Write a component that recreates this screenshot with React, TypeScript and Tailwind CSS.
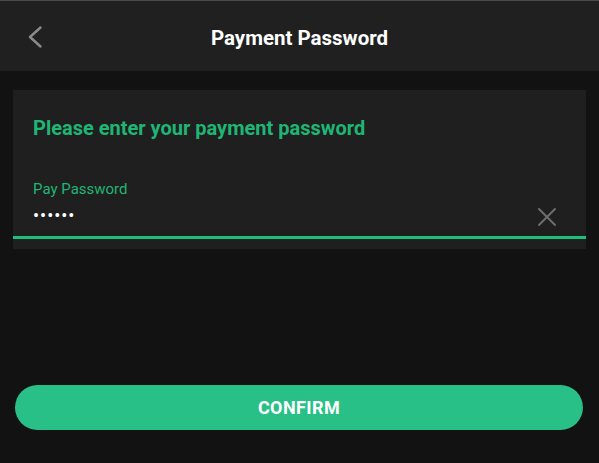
import { X } from 'lucide-react';

export default function App() {
  return (
    <div className="min-h-screen bg-[#121212] font-['Roboto',sans-serif]">
      {/* Header */}
      <header className="relative h-[71px] bg-[#202020] border-t border-[#4a4a4a] flex items-center justify-center">
        <button className="absolute left-[28px] top-[25px] text-[#8a8a8a]">
          <svg width="14" height="22" viewBox="0 0 14 22" fill="none" stroke="currentColor" strokeWidth="2.4" strokeLinecap="round" strokeLinejoin="round">
            <path d="M12.5 1.5 L2 11 L12.5 20.5" />
          </svg>
        </button>
        <h1 className="text-white text-[20.5px] font-bold leading-6 mt-[4px]">Payment Password</h1>
      </header>

      {/* Card */}
      <div className="mx-[13px] mt-[19px] bg-[#1f1f1f] pb-[10px]">
        <div className="pl-5 pr-[23px] pt-[26px]">
          <h2 className="text-[#1fb574] text-[20px] font-bold leading-6">Please enter your payment password</h2>
          <label className="block mt-[39px] text-[#1fb574] text-[15px] leading-5">Pay Password</label>
          <div className="flex items-center h-[37px]">
            <input
              type="password"
              readOnly
              value="123456"
              className="flex-1 bg-transparent text-white text-[18px] outline-none tracking-[1px] -mt-[5px]"
            />
            <X className="w-[32px] h-[32px] text-[#6e6e6e] -mt-[1px]" strokeWidth={1.5} />
          </div>
        </div>
        <div className="h-[3px] bg-[#1dbf7d]" />
      </div>

      {/* Confirm */}
      <button className="block mx-[15px] mt-[136px] w-[568px] h-[45px] rounded-full bg-[#28c087] text-white text-[18px] font-bold tracking-[0.4px]">
        CONFIRM
      </button>
    </div>
  );
}
